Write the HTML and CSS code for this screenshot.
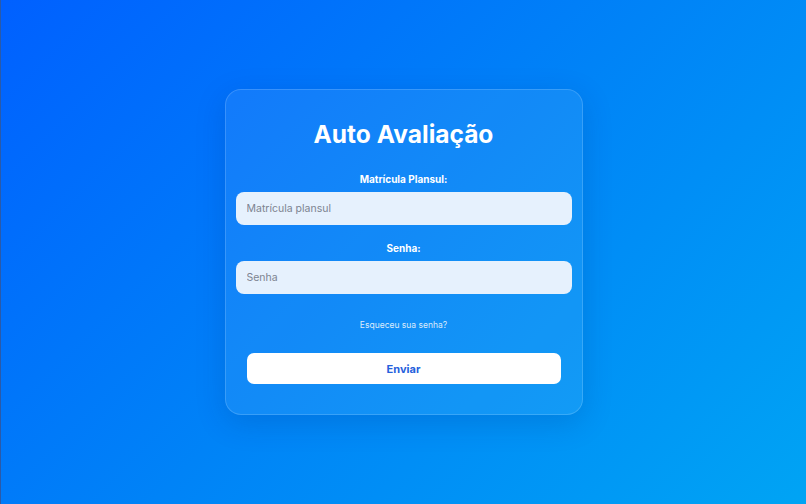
FILE: index.html
```html
<!DOCTYPE html>
<html lang="pt-BR">
<head>
<meta charset="utf-8">
<title>Auto Avaliação</title>
<link rel="stylesheet" href="styles.css">
</head>
<body>
<main class="page">
  <form class="card">
    <h1 class="title">Auto Avaliação</h1>
    <div class="field">
      <label class="label" for="mat">Matrícula Plansul:</label>
      <input class="input" id="mat" type="text" placeholder="Matrícula plansul">
    </div>
    <div class="field">
      <label class="label" for="pwd">Senha:</label>
      <input class="input" id="pwd" type="password" placeholder="Senha">
    </div>
    <a class="forgot" href="#">Esqueceu sua senha?</a>
    <button class="btn" type="button">Enviar</button>
  </form>
</main>
</body>
</html>
```
FILE: styles.css
```css
* { box-sizing: border-box; }
html, body { margin: 0; height: 100%; }
body {
  font-family: Inter, "Noto Sans", sans-serif;
  background: linear-gradient(135deg, #0060ff 0%, #0083f7 50%, #00a4f4 100%);
  border-left: 1px solid #2b5aa8;
}
.page {
  height: 100%;
  display: flex;
  justify-content: center;
  padding-top: 89px;
}
.card {
  width: 358px;
  height: 326px;
  padding: 18px 10px 0;
  border-radius: 16px;
  background: rgba(255, 255, 255, 0.07);
  border: 1px solid rgba(255, 255, 255, 0.16);
  box-shadow: 0 8px 30px rgba(0, 40, 120, 0.18);
  display: flex;
  flex-direction: column;
  align-items: center;
}
.title {
  margin: 10px 0 0;
  font-size: 24.5px;
  font-weight: 700;
  color: #fff;
  line-height: 32px;
}
.field {
  width: 100%;
  display: flex;
  flex-direction: column;
  align-items: center;
}
.field + .field { margin-top: 16px; }
.title + .field { margin-top: 22px; }
.label {
  font-size: 10px;
  font-weight: 700;
  color: #fff;
  line-height: 14px;
  margin-bottom: 6px;
}
.input {
  width: 100%;
  height: 33px;
  border: none;
  border-radius: 8px;
  background: #e6f1fd;
  padding: 0 11px;
  font-family: inherit;
  font-size: 10.5px;
  color: #333;
  outline: none;
}
.input::placeholder { color: #7d8490; }
.forgot {
  margin-top: 25px;
  font-size: 8.5px;
  color: #dcebfb;
  text-decoration: none;
  line-height: 12px;
}
.btn {
  margin-top: 22px;
  width: 314px;
  height: 31px;
  border: none;
  border-radius: 7px;
  background: #fff;
  color: #2560dc;
  font-family: inherit;
  font-size: 11px;
  font-weight: 700;
}
```
